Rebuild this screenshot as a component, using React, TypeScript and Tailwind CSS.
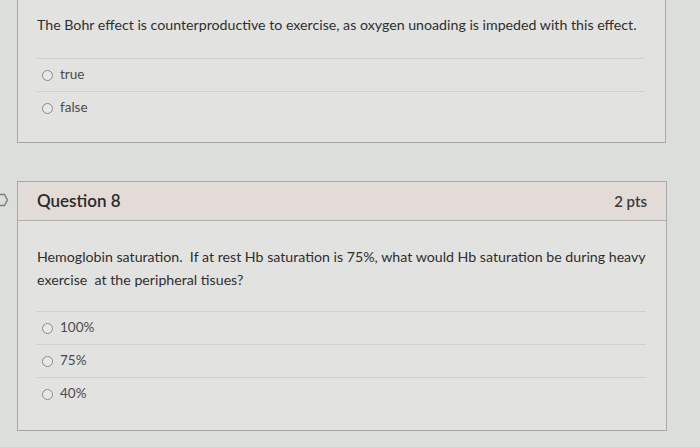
import React from "react";

function Radio() {
  return (
    <span className="inline-block w-[11px] h-[11px] rounded-full border border-[#8a8a8a] bg-[#e8e9e6] shrink-0" />
  );
}

function Option({ label, sep = true }: { label: string; sep?: boolean }) {
  return (
    <div className={`${sep ? "border-t border-[#d3cfcd]" : ""} h-[33px] flex items-center`}>
      <div className="flex items-center gap-[7px] pl-[5px]">
        <Radio />
        <span className="text-[13.5px] text-[#4a4a4a] leading-none">{label}</span>
      </div>
    </div>
  );
}

export default function App() {
  return (
    <div
      className="w-[700px] h-[447px] bg-[#dcdedb] overflow-hidden"
      style={{ fontFamily: "Lato, 'Open Sans', sans-serif" }}
    >
      <div className="flex">
        <div className="w-[17px] shrink-0" />
        <div className="w-[649px] border-x border-b border-[#a9a8a6] bg-[#e2e3e0] px-[19px] pt-[15px] pb-[18px]">
          <p className="text-[14.2px] leading-[20px] text-[#2e2e2e]">
            The Bohr effect is counterproductive to exercise, as oxygen unoading is impeded with this effect.
          </p>
          <div className="mt-[23px] mr-[2px]">
            <Option label="true" />
            <Option label="false" />
          </div>
        </div>
      </div>

      <div className="flex mt-[38px]">
        <div className="w-[17px] shrink-0 pt-[12px]">
          <svg width="17" height="14" viewBox="0 0 17 14">
            <path d="M-2 1.5 L4.5 1.5 L7.5 7 L4.5 12.5 L-2 12.5" fill="none" stroke="#7d7d7d" strokeWidth="1.4" />
          </svg>
        </div>
        <div className="w-[650px] border border-[#a9a8a6] bg-[#e2e3e0]">
          <div className="h-[39px] bg-[#e3dbd7] border-b border-[#b3aeab] flex items-center justify-between px-[19px]">
            <span className="text-[17px] font-semibold text-[#2a2a2a]">Question 8</span>
            <span className="text-[15px] font-semibold text-[#3a3a3a]">2 pts</span>
          </div>
          <div className="px-[19px] pt-[24px] pb-[20px]">
            <p className="text-[14.2px] leading-[23px] text-[#2e2e2e]">
              Hemoglobin saturation.&nbsp; If at rest Hb saturation is 75%, what would Hb saturation be during heavy exercise&nbsp; at the peripheral tisues?
            </p>
            <div className="mt-[20px] mr-[1px]">
              <Option label="100%" />
              <Option label="75%" />
              <Option label="40%" />
            </div>
          </div>
        </div>
      </div>
    </div>
  );
}
